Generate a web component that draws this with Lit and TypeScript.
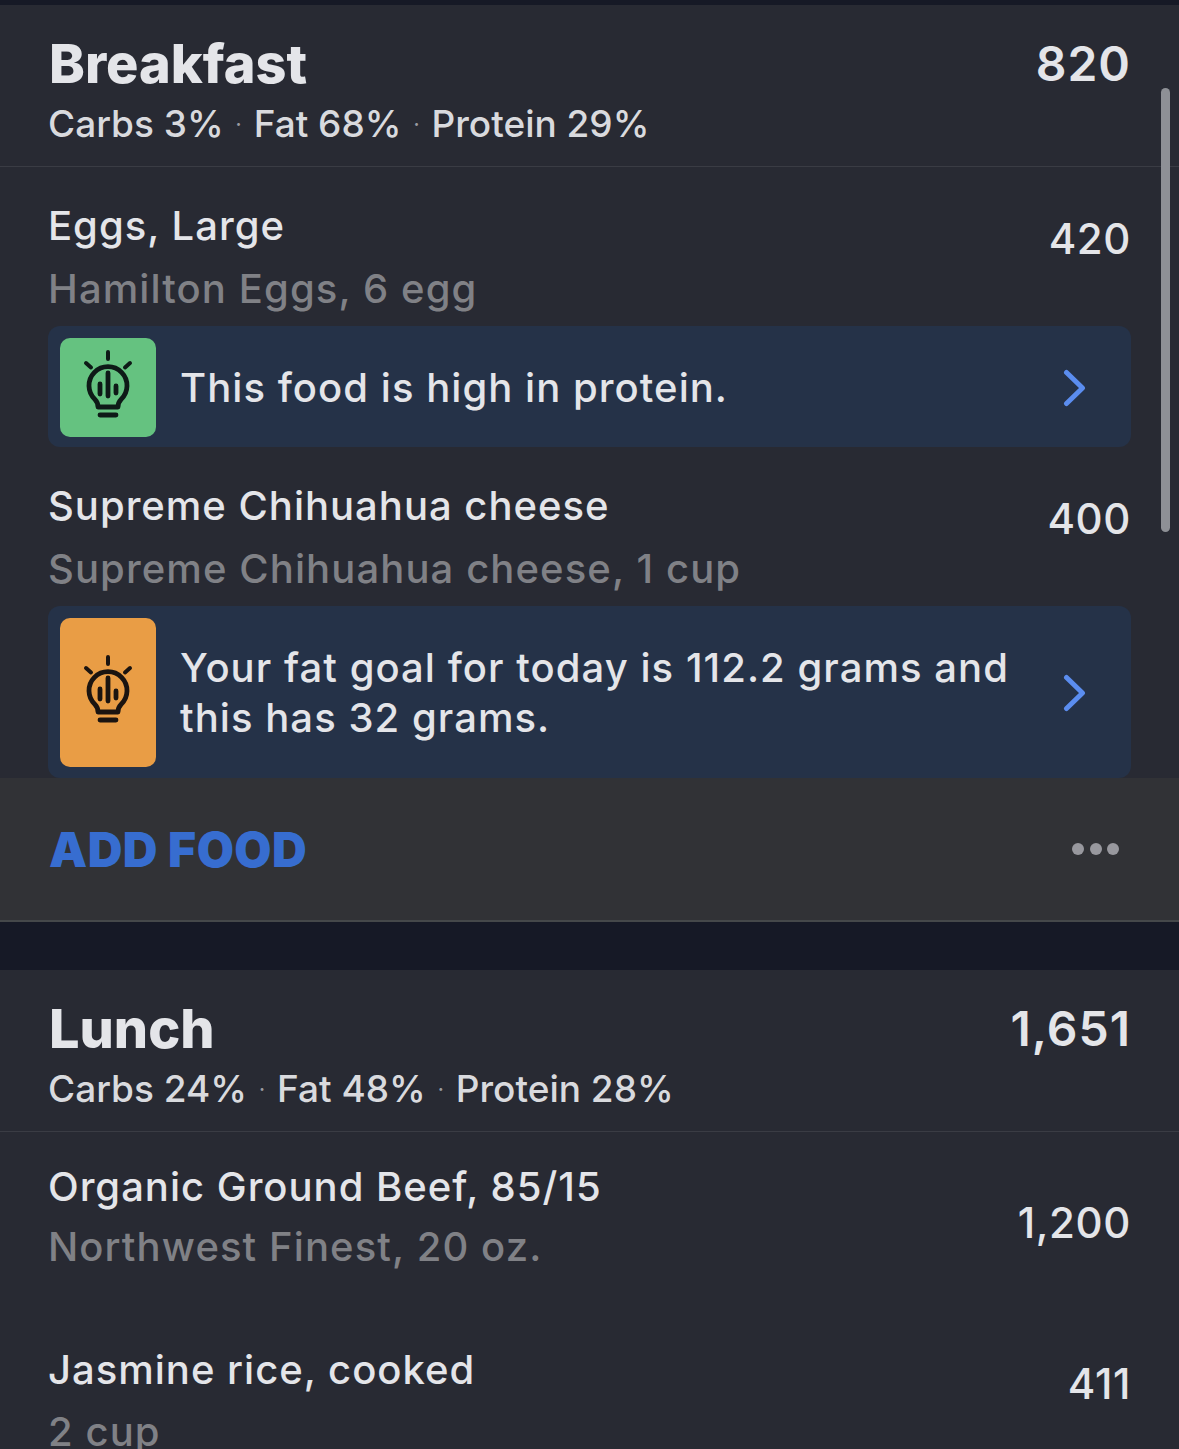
import { LitElement, html, css, svg } from 'lit';
import { customElement } from 'lit/decorators.js';

interface Tip { text: string[]; color: string; tall?: boolean; }
interface Food { name: string; sub: string; cal: string; pos?: string; tip?: Tip; cls?: string; }
interface Meal { title: string; total: string; macros: string[]; foods: Food[]; add?: boolean; }

const MEALS: Meal[] = [
    {
        title: 'Breakfast', total: '820', add: true,
        macros: ['Carbs 3%', 'Fat 68%', 'Protein 29%'],
        foods: [
            { name: 'Eggs, Large', sub: 'Hamilton Eggs, 6 egg', cal: '420', tip: { text: ['This food is high in protein.'], color: 'green' } },
            { name: 'Supreme Chihuahua cheese', sub: 'Supreme Chihuahua cheese, 1 cup', cal: '400', tip: { text: ['Your fat goal for today is 112.2 grams and', 'this has 32 grams.'], color: 'orange', tall: true } },
        ],
    },
    {
        title: 'Lunch', total: '1,651',
        macros: ['Carbs 24%', 'Fat 48%', 'Protein 28%'],
        foods: [
            { name: 'Organic Ground Beef, 85/15', sub: 'Northwest Finest, 20 oz.', cal: '1,200', pos: 'mid', cls: 'plain' },
            { name: 'Jasmine rice, cooked', sub: '2 cup', cal: '411', pos: 'low', cls: 'plain' },
        ],
    },
];

const bulb = svg`
  <path d="M20 57C20 54 19.5 52 17 49.5A19 19 0 1 1 43 49.5C40.5 52 40 54 40 57Z" />
  <path d="M30 23V46M22 34V44M38 36V43M22 65H38" />
  <path class="rays" d="M30 2V9M8 13L13 17.5M52 13L47 17.5" />
`;

@customElement('app-root')
export class AppRoot extends LitElement {
    static override styles = css`
    :host {
      display: block; position: relative;
      height: 1449px; overflow: hidden;
      background: #161926;
      padding-top: 5px; box-sizing: border-box;
      font-family: Inter, "Noto Sans", sans-serif;
      color: #e4e5e9;
    }

    .meal { background: #282a33; }
    .meal + .meal { margin-top: 48px; }

    .head {
      height: 162px; box-sizing: border-box;
      padding: 24px 48px 0 50px;
      border-bottom: 1px solid #3a3c44;
      display: flex; justify-content: space-between; align-items: flex-start;
    }
    .title { font-size: 54px; line-height: 70px; font-weight: 800; margin-left: -1px; }
    .total { font-size: 48px; line-height: 70px; font-weight: 600; letter-spacing: 1px; }

    .macros {
      display: flex; align-items: center;
      font-size: 37px; line-height: 50px; font-weight: 500; color: #d9dade;
      margin-left: -2px;
    }
    .dot { width: 30px; text-align: center; font-size: 20px; color: #9a9ba0; }

    .food { padding: 28px 48px 0 48px; }
    .food.plain { padding-top: 25px; height: 183px; box-sizing: border-box; }
    .row { display: flex; justify-content: space-between; align-items: flex-start; }
    .name, .sub { font-size: 40px; line-height: 62px; font-weight: 550; letter-spacing: 1px; }
    .sub { color: #808186; margin-top: 1px; letter-spacing: 1.1px; }
    .plain .name, .plain .sub { line-height: 60px; }
    .plain .sub { margin-top: 0; }
    .plain + .plain .sub { margin-top: 2px; }
    .cal { font-size: 42px; line-height: 62px; font-weight: 500; margin-top: 13px; letter-spacing: 0.6px; }
    .cal.mid { margin-top: 35px; }
    .cal.low { margin-top: 13px; }

    .tip {
      margin: 6px 0 0 0;
      padding: 12px 45px 10px 12px;
      border-radius: 12px;
      background: #253248;
      display: flex; align-items: center;
    }
    .tip.tall { padding-bottom: 11px; }
    .tile {
      flex: none; width: 96px; height: 99px; border-radius: 10px;
      display: flex; align-items: center; justify-content: center;
    }
    .tall .tile { height: 149px; }
    .tile.green { background: #65c280; }
    .tile.orange { background: #e99d45; }
    .tile svg {
      width: 60px; height: 70px; margin-bottom: 5px;
      fill: none; stroke: #0e1a17; stroke-width: 4.8; stroke-linecap: round; stroke-linejoin: round;
    }
    .tile svg .rays { stroke-width: 4; }
    .tile.orange svg { stroke: #1b1410; }
    .tip-text { flex: 1; margin-left: 24px; font-size: 40px; line-height: 50px; font-weight: 550; letter-spacing: 1.05px; }
    .chev { flex: none; width: 26px; height: 38px; fill: none; stroke: #5b8def; stroke-width: 5; stroke-linecap: round; stroke-linejoin: round; }

    .foot {
      height: 144px; box-sizing: border-box;
      padding: 0 60px 0 49px;
      background: #313236;
      border-bottom: 2px solid #45484a;
      display: flex; justify-content: space-between; align-items: center;
    }
    .add { font-size: 48px; font-weight: 900; color: #376dd0; letter-spacing: 0.5px; }
    .more { display: flex; gap: 5.5px; }
    .more span { width: 12px; height: 12px; border-radius: 50%; background: #98989e; }

    .scroll {
      position: absolute; left: 1161px; top: 88px;
      width: 9px; height: 444px; border-radius: 5px;
      background: #8e9096;
    }
  `;

    private renderTip(tip: Tip) {
        return html`
      <div class="tip ${tip.tall ? 'tall' : ''}">
        <div class="tile ${tip.color}"><svg viewBox="0 0 60 70">${bulb}</svg></div>
        <div class="tip-text">${tip.text.map(line => html`<div>${line}</div>`)}</div>
        <svg class="chev" viewBox="0 0 26 38"><path d="M6.5 3.5L22.5 19L6.5 34.5" /></svg>
      </div>
    `;
    }

    override render() {
        return html`
      ${MEALS.map(meal => html`
        <section class="meal">
          <div class="head">
            <div>
              <div class="title">${meal.title}</div>
              <div class="macros">
                ${meal.macros.map((m, i) => html`${i ? html`<span class="dot">·</span>` : ''}<span>${m}</span>`)}
              </div>
            </div>
            <div class="total">${meal.total}</div>
          </div>
          ${meal.foods.map(food => html`
            <div class="food ${food.cls ?? ''}">
              <div class="row">
                <div>
                  <div class="name">${food.name}</div>
                  <div class="sub">${food.sub}</div>
                </div>
                <div class="cal ${food.pos ?? ''}">${food.cal}</div>
              </div>
              ${food.tip ? this.renderTip(food.tip) : ''}
            </div>
          `)}
          ${meal.add ? html`
            <div class="foot">
              <div class="add">ADD FOOD</div>
              <div class="more"><span></span><span></span><span></span></div>
            </div>
          ` : ''}
        </section>
      `)}
      <div class="scroll"></div>
    `;
    }
}

declare global {
    interface HTMLElementTagNameMap { 'app-root': AppRoot; }
}
